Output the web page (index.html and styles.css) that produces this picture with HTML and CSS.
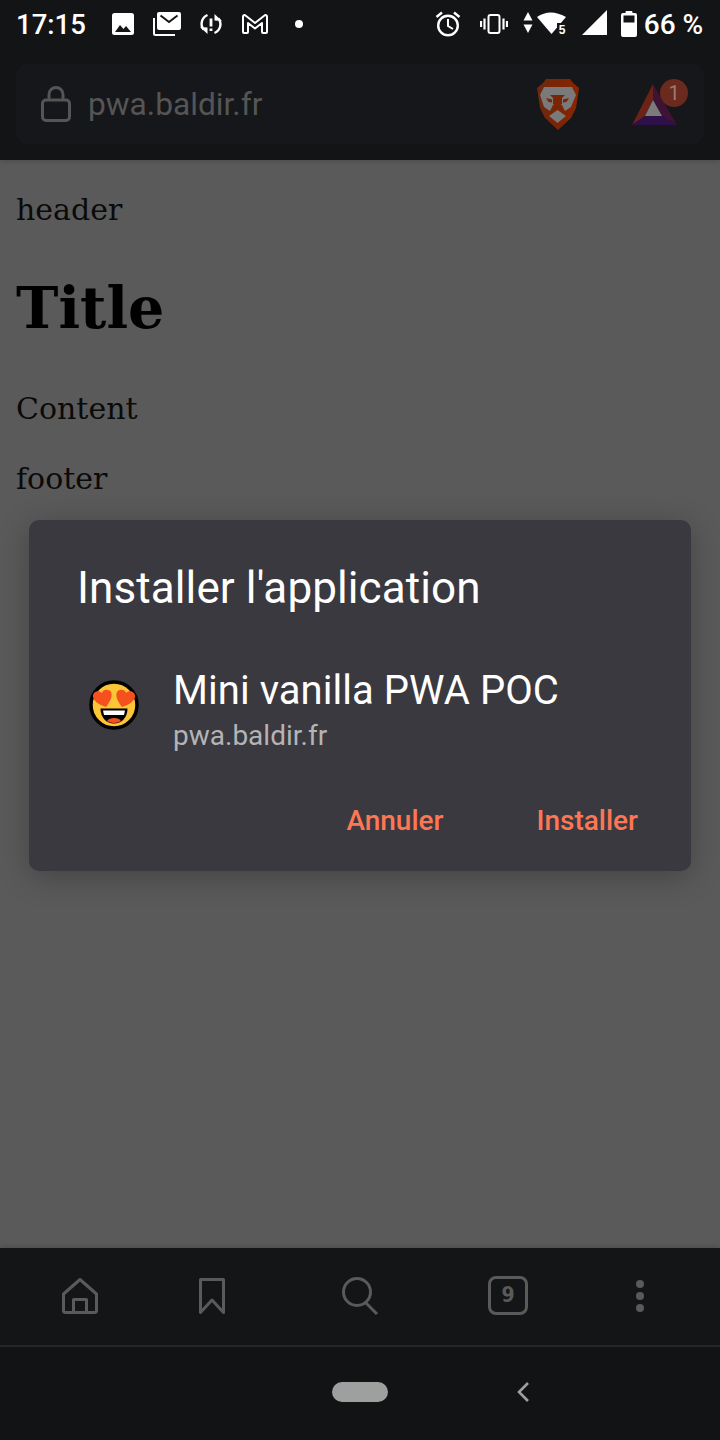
FILE: index.html
```html
<!DOCTYPE html>
<html lang="fr">
<head>
<meta charset="utf-8">
<title>pwa.baldir.fr</title>
<link rel="stylesheet" href="styles.css">
</head>
<body>
<div class="screen">
  <header class="chrome">
    <div class="statusbar">
      <span class="time">17:15</span>
      <svg class="si s-image" width="22" height="22" viewBox="0 0 22 22"><rect width="22" height="22" rx="2.5" fill="#fff"/><path d="M3 19l5-7 3.500 4 2.500-3 5 6z" fill="#131517"/></svg>
      <svg class="si s-mail" width="28" height="24" viewBox="0 0 28 24"><path d="M1 6v15.500a1.500 1.500 0 0 0 1.500 1.500H22" fill="none" stroke="#fff" stroke-width="2"/><rect x="4" y="0" width="24" height="18" rx="2" fill="#fff"/><path d="M7.500 3.500L16 10l8.500-6.500" fill="none" stroke="#131517" stroke-width="2"/></svg>
      <svg class="si s-sync" width="24" height="22" viewBox="0 0 24 22"><path d="M8.500 2A9.500 9.500 0 0 0 4.500 16.500" fill="none" stroke="#fff" stroke-width="2.400"/><path d="M1 14l7.500.5V21z" fill="#fff"/><path d="M15.500 20A9.500 9.500 0 0 0 19.500 5.500" fill="none" stroke="#fff" stroke-width="2.400"/><path d="M23 8l-7.500-.5V1z" fill="#fff"/><path d="M12 5.500v8M12 15.500v2.600" stroke="#fff" stroke-width="2.800"/></svg>
      <svg class="si s-gmail" width="26" height="20" viewBox="0 0 26 20"><path d="M1 2.500a1.500 1.500 0 0 1 2.500-1L13 9l9.500-7.500a1.500 1.500 0 0 1 2.500 1V18a1 1 0 0 1-1 1h-3a1 1 0 0 1-1-1V9l-7 5.500L6 9v9a1 1 0 0 1-1 1H2a1 1 0 0 1-1-1z" fill="none" stroke="#fff" stroke-width="2" stroke-linejoin="round"/></svg>
      <span class="dot"></span>
      <svg class="si s-alarm" width="26" height="26" viewBox="0 0 26 26"><circle cx="13" cy="14.500" r="9.800" fill="none" stroke="#fff" stroke-width="2.400"/><path d="M13 8v7l5 3" fill="none" stroke="#fff" stroke-width="2"/><path d="M1.500 6L7 1.500M24.500 6L19 1.500" stroke="#fff" stroke-width="2.400"/></svg>
      <svg class="si s-vibrate" width="28" height="20" viewBox="0 0 28 20"><rect x="8.500" y="1" width="11" height="18" rx="2" fill="none" stroke="#fff" stroke-width="2"/><path d="M4.500 4.500v11M23.500 4.500v11M1 7v6M27 7v6" stroke="#fff" stroke-width="2.200"/></svg>
      <svg class="si s-arrows" width="10" height="21" viewBox="0 0 10 21"><path d="M5 0l4.500 8.500h-9zM5 21L.5 12.500h9z" fill="#fff"/></svg>
      <svg class="si s-wifi" width="30" height="28" viewBox="0 0 30 28"><path d="M0 6Q13-3 29 6L14.500 23z" fill="#fff"/><path d="M20 12h10v14H20z" fill="#131517"/><text class="wifi-num" x="25" y="23" text-anchor="middle">5</text></svg>
      <svg class="si s-signal" width="25" height="25" viewBox="0 0 25 25"><path d="M25 0v25H0z" fill="#fff"/></svg>
      <svg class="si s-battery" width="16" height="26" viewBox="0 0 16 26"><path d="M4.500 2V1a1 1 0 0 1 1-1h5a1 1 0 0 1 1 1v1H14a2 2 0 0 1 2 2v20a2 2 0 0 1-2 2H2a2 2 0 0 1-2-2V4a2 2 0 0 1 2-2z" fill="#fff"/><rect x="2.500" y="4.500" width="11" height="7" fill="#131517"/></svg>
      <span class="battery">66 %</span>
    </div>
    <div class="urlbar">
      <svg class="lock" width="30" height="36" viewBox="0 0 30 36"><rect x="1.500" y="14" width="27" height="20.500" rx="3.500" fill="none" stroke="#555" stroke-width="3"/><path d="M8 14V8.500a7 7 0 0 1 14 0V14" fill="none" stroke="#555" stroke-width="3"/></svg>
      <span class="url">pwa.baldir.fr</span>
      <svg class="lion" width="44" height="51" viewBox="0 0 44 51">
        <defs><linearGradient id="lionfill" x1="0" x2="1" y1="0" y2="0"><stop offset="0" stop-color="#6e2810"/><stop offset=".5" stop-color="#7a2505"/><stop offset="1" stop-color="#8a2600"/></linearGradient></defs>
        <path d="M10 0h24l3 4 6 5-3 20-5 10-13 12-13-12-5-10L1 9l6-5z" fill="url(#lionfill)"/>
        <path d="M8 8h28l4 8-5 12-6 4-3-6-4.500-1-4.500 1-3 6-6-4L4 16z" fill="#7a7a7a"/>
        <path d="M21.500 31l8.500 6-8.500 7-8.500-7z" fill="#7a7a7a"/>
        <path d="M14 16h15l-3 3v6l-4.500 2.500L17 25v-6z" fill="#7a2505"/>
        <path d="M10 19l6 1.500v3L12.500 23zM33 19l-6 1.500v3l3.500-.5z" fill="#7a2505"/>
      </svg>
      <div class="rewards">
        <svg width="45" height="41" viewBox="0 0 45 41">
          <path d="M21 0L0 41l13-9 8-16z" fill="#6b2317"/>
          <path d="M21 0l24 41-15-9-9-16z" fill="#3f1336"/>
          <path d="M0 41h45l-15-9H13z" fill="#2f104a"/>
          <path d="M21 16L13 32h17z" fill="#7b7b7b"/>
        </svg>
        <span class="badge">1</span>
      </div>
    </div>
  </header>

  <main class="page">
    <p class="para first">header</p>
    <h1 class="title">Title</h1>
    <p class="para">Content</p>
    <p class="para">footer</p>
  </main>

  <div class="dialog">
    <h2 class="dialog-title">Installer l'application</h2>
    <div class="app">
      <svg class="emoji" width="50" height="50" viewBox="0 0 50 50">
        <circle cx="25" cy="25" r="23" fill="#fcc437" stroke="#000" stroke-width="3.500"/>
        <path d="M17 27C10 25 3 20 4 15c1-4 6-5 9-2 1-4 7-4 9-1 2 4-1 10-5 15z" fill="#f4511e"/>
        <path d="M33 27c7-2 14-7 13-12-1-4-6-5-9-2-1-4-7-4-9-1-2 4 1 10 5 15z" fill="#f4511e"/>
        <path d="M11.500 28.500h27c0 9-6 15-13.500 15S11.500 37.500 11.500 28.500z" fill="#000"/>
        <path d="M14 30.500h22l-1 4.500H15z" fill="#fff"/>
        <path d="M18 41c2-4 12-4 14 0-4 2.500-10 2.500-14 0z" fill="#f4511e"/>
      </svg>
      <div class="app-text">
        <div class="app-name">Mini vanilla PWA POC</div>
        <div class="app-url">pwa.baldir.fr</div>
      </div>
    </div>
    <div class="actions">
      <span class="action">Annuler</span>
      <span class="action">Installer</span>
    </div>
  </div>

  <nav class="toolbar">
    <svg class="ti t-home" width="36" height="36" viewBox="0 0 36 36"><path d="M1.500 16L18 1.500 34.500 16v16.500a2 2 0 0 1-2 2h-29a2 2 0 0 1-2-2zM11.500 34V21.500h13V34" fill="none" stroke="#5a5a5a" stroke-width="3" stroke-linejoin="round"/></svg>
    <svg class="ti t-mark" width="26" height="36" viewBox="0 0 26 36"><path d="M1.500 1.500h23v33L13 22 1.500 34.500z" fill="none" stroke="#5a5a5a" stroke-width="3" stroke-linejoin="round"/></svg>
    <svg class="ti t-search" width="36" height="38" viewBox="0 0 36 38"><circle cx="15" cy="15" r="13.500" fill="none" stroke="#5a5a5a" stroke-width="3"/><path d="M24 26l11 11" stroke="#5a5a5a" stroke-width="3"/></svg>
    <div class="tabs">9</div>
    <div class="more"><i></i><i></i><i></i></div>
  </nav>
  <div class="navbar">
    <span class="pill"></span>
    <svg class="back" width="14" height="20" viewBox="0 0 14 20"><path d="M12 1L3 10l9 9" fill="none" stroke="#9ea0a0" stroke-width="2.600"/></svg>
  </div>
</div>
</body>
</html>
```
FILE: styles.css
```css
* { box-sizing: border-box; }
html, body { margin: 0; padding: 0; }
body { width: 720px; height: 1440px; overflow: hidden; background: #131517; }
.screen { position: relative; width: 720px; height: 1440px; display: flex; flex-direction: column; }

.chrome { height: 160px; background: #121416; padding: 0 16px; display: flex; flex-direction: column; position: relative; box-shadow: 0 2px 4px rgba(0,0,0,.12); }
.statusbar { height: 64px; display: flex; align-items: flex-start; margin: 0 -16px; padding: 0 17px; }
.time { font: 500 27.500px/32px Roboto, sans-serif; color: #fff; width: 70px; margin: 9px 0 0 -1px; white-space: nowrap; }
.si { display: block; flex: none; }
.s-image { margin: 13px 0 0 26px; }
.s-mail { margin: 12px 0 0 19px; }
.s-sync { margin: 13px 0 0 18px; }
.s-gmail { margin: 14px 0 0 19px; }
.dot { width: 8px; height: 8px; border-radius: 50%; background: #fff; margin: 20px 0 0 27px; flex: none; }
.s-alarm { margin: 11px 0 0 132px; }
.s-vibrate { margin: 14px 0 0 19px; }
.s-arrows { margin: 12px 0 0 15px; }
.s-wifi { margin: 11px 0 0 4px; }
.wifi-num { font: 700 12px "Liberation Sans", sans-serif; fill: #fff; }
.s-signal { margin: 10px 0 0 15px; }
.s-battery { margin: 11px 0 0 14px; }
.battery { font: 500 28px/32px Roboto, sans-serif; color: #fff; margin: 9px 0 0 7px; white-space: nowrap; }

.urlbar { height: 80px; background: #15171a; border-radius: 12px; display: flex; align-items: center; padding-left: 25px; }
.lock { flex: none; }
.url { font: 400 31.700px/40px Roboto, sans-serif; color: #555; margin: 2px 0 0 17px; width: 174px; white-space: nowrap; }
.lion { flex: none; margin-left: 274px; }
.rewards { position: relative; width: 45px; height: 41px; margin-left: 52px; flex: none; }
.rewards svg { display: block; }
.badge { position: absolute; left: 28px; top: -5px; width: 28px; height: 28px; border-radius: 50%; background: #6a2a1e; color: #9a7a70; font: 400 20px/28px Roboto, sans-serif; text-align: center; }

.page { flex: 1; background: #5a5a5a; padding: 31px 16px 0; color: #000; font-family: "DejaVu Serif", serif; }
.para { margin: 0 0 32px; font-size: 30px; line-height: 38px; color: #0a0a0a; }
.para.first { margin-bottom: 41px; }
.title { margin: 0 0 44px; font-size: 57px; line-height: 76px; font-weight: 700; }

.dialog { position: absolute; left: 29px; top: 520px; width: 662px; height: 351px; background: #3a393f; border-radius: 10px; box-shadow: 0 6px 30px rgba(0,0,0,.25); padding: 41px 53px 0 48px; display: flex; flex-direction: column; }
.dialog-title { margin: 0; font: 400 44px/54px Roboto, sans-serif; color: #fff; white-space: nowrap; letter-spacing: .1px; }
.app { display: flex; align-items: flex-start; margin-top: 52px; padding-left: 12px; }
.emoji { flex: none; margin-top: 13px; }
.app-text { margin-left: 34px; }
.app-name { font: 400 40px/48px Roboto, sans-serif; color: #fff; white-space: nowrap; letter-spacing: .05px; }
.app-url { font: 400 28px/36px Roboto, sans-serif; color: #b4b4b6; margin-top: 3px; }
.actions { display: flex; justify-content: flex-end; gap: 94px; margin-top: 49px; }
.action { font: 500 28px/36px Roboto, sans-serif; color: #ff7654; }
.action:first-child { margin-right: -1px; }

.toolbar { height: 97px; background: #131517; display: flex; align-items: flex-start; padding-left: 62px; position: relative; box-shadow: 0 -2px 4px rgba(0,0,0,.12); }
.ti { display: block; flex: none; margin-top: 30px; }
.t-mark { margin-left: 101px; }
.t-search { margin-left: 117px; margin-top: 29px; }
.tabs { margin: 28px 0 0 110px; width: 40px; height: 39px; border: 3px solid #5a5a5a; border-radius: 8px; color: #5a5a5a; font: 700 21px/33px "DejaVu Sans Condensed", "DejaVu Sans", sans-serif; text-align: center; flex: none; }
.more { margin: 32px 0 0 108px; display: flex; flex-direction: column; gap: 4px; }
.more i { display: block; width: 8px; height: 8px; border-radius: 50%; background: #5a5a5a; }

.navbar { height: 95px; background: #111315; border-top: 2px solid #242628; display: flex; align-items: flex-start; padding: 35px 0 0 332px; }
.pill { width: 56px; height: 20px; border-radius: 10px; background: #9ea0a0; }
.back { flex: none; margin-left: 128px; }
```
